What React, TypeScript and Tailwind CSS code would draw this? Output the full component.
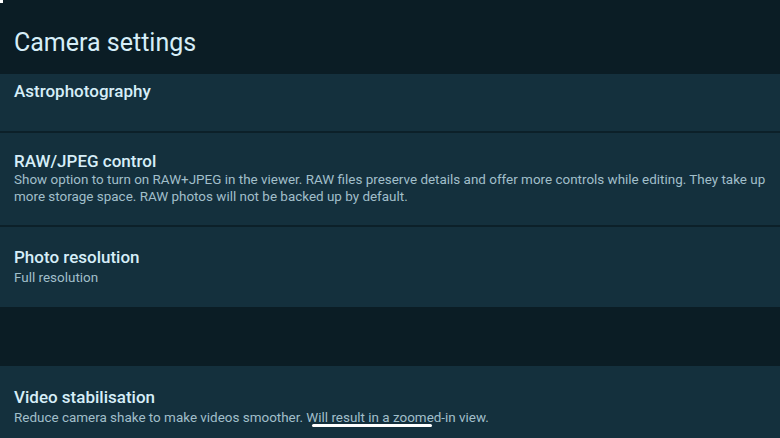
import React from "react";

export default function App() {
  const font = { fontFamily: "Roboto, 'Open Sans', sans-serif" };
  return (
    <div className="relative w-[780px] h-[438px] overflow-hidden bg-[#0b1d25]" style={font}>
      <div className="absolute left-0 top-0 w-[3px] h-[3px] bg-white" />
      <div className="h-[74px] flex items-center px-[14px] pt-[10px]">
        <h1 className="text-[25px] leading-none text-[#d6eef8]">Camera settings</h1>
      </div>
      <div className="flex flex-col">
        <div className="h-[57px] bg-[#14303d] px-[14px] pt-[6px]">
          <div className="text-[17px] leading-[22px] font-medium text-[#d6eef8]">Astrophotography</div>
        </div>
        <div className="h-[2px] bg-[#0c2029]" />
        <div className="h-[92px] bg-[#14303d] px-[14px] pt-[17px]">
          <div className="text-[17px] leading-[22px] font-medium text-[#d6eef8]">RAW/JPEG control</div>
          <div className="text-[13.45px] leading-[16.5px] text-[#a1bfca]">
            <div>Show option to turn on RAW+JPEG in the viewer. RAW files preserve details and offer more controls while editing. They take up</div>
            <div>more storage space. RAW photos will not be backed up by default.</div>
          </div>
        </div>
        <div className="h-[2px] bg-[#0c2029]" />
        <div className="h-[80px] bg-[#14303d] px-[14px] pt-[19px]">
          <div className="text-[17px] leading-[22px] font-medium text-[#d6eef8]">Photo resolution</div>
          <div className="text-[13.45px] leading-[18px] text-[#a1bfca] pt-[1px]">Full resolution</div>
        </div>
        <div className="h-[59px] bg-[#0b1d25]" />
        <div className="h-[72px] bg-[#14303d] px-[14px] pt-[20px]">
          <div className="text-[17px] leading-[22px] font-medium text-[#d6eef8]">Video stabilisation</div>
          <div className="text-[13.45px] leading-[18px] text-[#a1bfca] pt-[1px]">Reduce camera shake to make videos smoother. Will result in a zoomed-in view.</div>
        </div>
      </div>
      <div className="absolute left-[312px] top-[424px] w-[120px] h-[3px] rounded-full bg-white" />
    </div>
  );
}
